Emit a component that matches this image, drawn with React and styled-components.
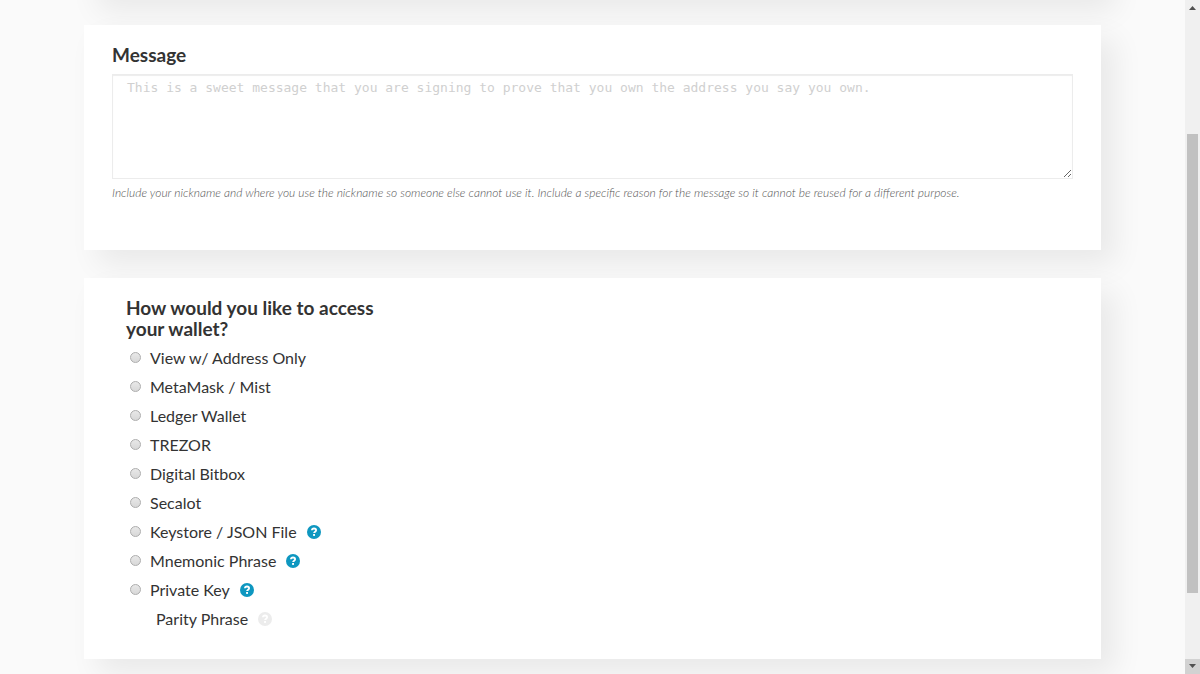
import React from "react";
import styled, { createGlobalStyle } from "styled-components";

const wallets = [
  { id: "view", label: "View w/ Address Only" },
  { id: "metamask", label: "MetaMask / Mist" },
  { id: "ledger", label: "Ledger Wallet" },
  { id: "trezor", label: "TREZOR" },
  { id: "bitbox", label: "Digital Bitbox" },
  { id: "secalot", label: "Secalot" },
  { id: "keystore", label: "Keystore / JSON File", help: true },
  { id: "mnemonic", label: "Mnemonic Phrase", help: true },
  { id: "privatekey", label: "Private Key", help: true },
];

function HelpIcon() {
  return (
    <svg viewBox="0 0 14 14" width="14" height="14" aria-hidden="true">
      <circle cx="7" cy="7" r="7" fill="currentColor" />
      <path
        d="M4.9 5.3C5 4.1 5.8 3.5 7 3.5c1.2 0 2.1.7 2.1 1.7 0 1.5-2 1.4-2 2.9"
        fill="none"
        stroke="#fff"
        strokeWidth="1.8"
      />
      <rect x="6.1" y="9" width="1.9" height="1.9" fill="#fff" />
    </svg>
  );
}

export default function App() {
  return (
    <Screen>
      <GlobalStyle />
      <Main>
        <PreviousPane />
        <Pane>
          <Title as="label" htmlFor="message">Message</Title>
          <TextArea
            id="message"
            placeholder="This is a sweet message that you are signing to prove that you own the address you say you own."
          />
          <Hint>
            Include your nickname and where you use the nickname so someone else cannot use it.
            Include a specific reason for the message so it cannot be reused for a different purpose.
          </Hint>
        </Pane>
        <Pane>
          <Options>
            <Title>How would you like to access your wallet?</Title>
            {wallets.map(({ id, label, help }) => (
              <Row key={id}>
                <Radio type="radio" name="wallet" id={id} />
                <Label htmlFor={id}>{label}</Label>
                {help && (
                  <Help href="#help" aria-label={`Help with ${label}`}>
                    <HelpIcon />
                  </Help>
                )}
              </Row>
            ))}
            <Row $indent>
              <span>Parity Phrase</span>
              <Help href="#help" aria-label="Help with Parity Phrase" $muted>
                <HelpIcon />
              </Help>
            </Row>
          </Options>
        </Pane>
      </Main>
      <ScrollBar aria-hidden="true">
        <Arrow viewBox="0 0 15 15">
          <path d="M4 10h7L7.500 6z" fill="#505050" />
        </Arrow>
        <Track>
          <Thumb />
        </Track>
        <Arrow viewBox="0 0 15 15" $active>
          <path d="M4 5h7L7.500 9z" fill="#505050" />
        </Arrow>
      </ScrollBar>
    </Screen>
  );
}

const GlobalStyle = createGlobalStyle`
  * {
    box-sizing: border-box;
  }

  body {
    margin: 0;
    background: #fafafa;
    color: #333;
    font-family: Lato, "Open Sans", sans-serif;
    font-size: 16px;
  }
`;

const Screen = styled.div`
  display: flex;
  height: 100vh;
  overflow: hidden;
`;

const Main = styled.main`
  flex: 1;
  display: flex;
  flex-direction: column;
  gap: 28px;
  min-width: 0;
  padding: 0 84px;
  overflow: hidden;
`;

const Pane = styled.section`
  flex: none;
  padding: 19px 28px 49px;
  background: #fff;
  box-shadow: 14px 14px 28px 0 rgba(0, 0, 0, 0.07);

  & + & + & {
    padding-bottom: 26px;
  }
`;

/* already scrolled past, only its shadow reaches the view */
const PreviousPane = styled(Pane)`
  height: 200px;
  margin-top: -203px;
`;

const Title = styled.h4`
  display: block;
  margin: 0;
  font-size: 19px;
  font-weight: 700;
  line-height: 21px;
`;

const TextArea = styled.textarea`
  display: block;
  width: 100%;
  height: 105px;
  margin-top: 9px;
  padding: 4px 14px;
  border: 1px solid #ececec;
  background: #fff;
  box-shadow: inset 0 1px 1px rgba(0, 0, 0, 0.075);
  font-family: "DejaVu Sans Mono", monospace;
  font-size: 13px;
  line-height: 17px;
  resize: vertical;

  &::placeholder {
    color: #d0d0d0;
  }
`;

const Hint = styled.p`
  margin: 6px 0 0;
  color: #555;
  font-size: 12px;
  font-style: italic;
  font-weight: 300;
  line-height: 16px;
`;

const Options = styled.div`
  max-width: 292px;
  padding: 0 14px;

  ${Title} {
    margin-bottom: 4px;
  }
`;

const Row = styled.div`
  display: flex;
  align-items: center;
  height: 29px;
  padding-left: ${(props) => (props.$indent ? "30px" : "4px")};
`;

const Radio = styled.input`
  appearance: none;
  width: 11px;
  height: 11px;
  margin: 0 9px 0 0;
  border: 1px solid #adadad;
  border-radius: 50%;
  background: linear-gradient(#e8e8e8, #d8d8d8);

  &:checked {
    background: radial-gradient(#444 35%, #e0e0e0 40%);
  }
`;

const Label = styled.label`
  cursor: pointer;
`;

const Help = styled.a`
  display: flex;
  margin-left: 10px;
  color: ${(props) => (props.$muted ? "#ececec" : "#0e97c0")};
`;

const ScrollBar = styled.div`
  display: flex;
  flex-direction: column;
  width: 15px;
  background: #f0f0f0;
`;

const Arrow = styled.svg`
  width: 15px;
  height: 15px;
  background: ${(props) => (props.$active ? "#d2d2d2" : "transparent")};
`;

const Track = styled.div`
  flex: 1;
  display: flex;
  flex-direction: column;
  padding: 119px 2px 66px;
`;

const Thumb = styled.div`
  flex: 1;
  background: #c1c1c1;
`;
